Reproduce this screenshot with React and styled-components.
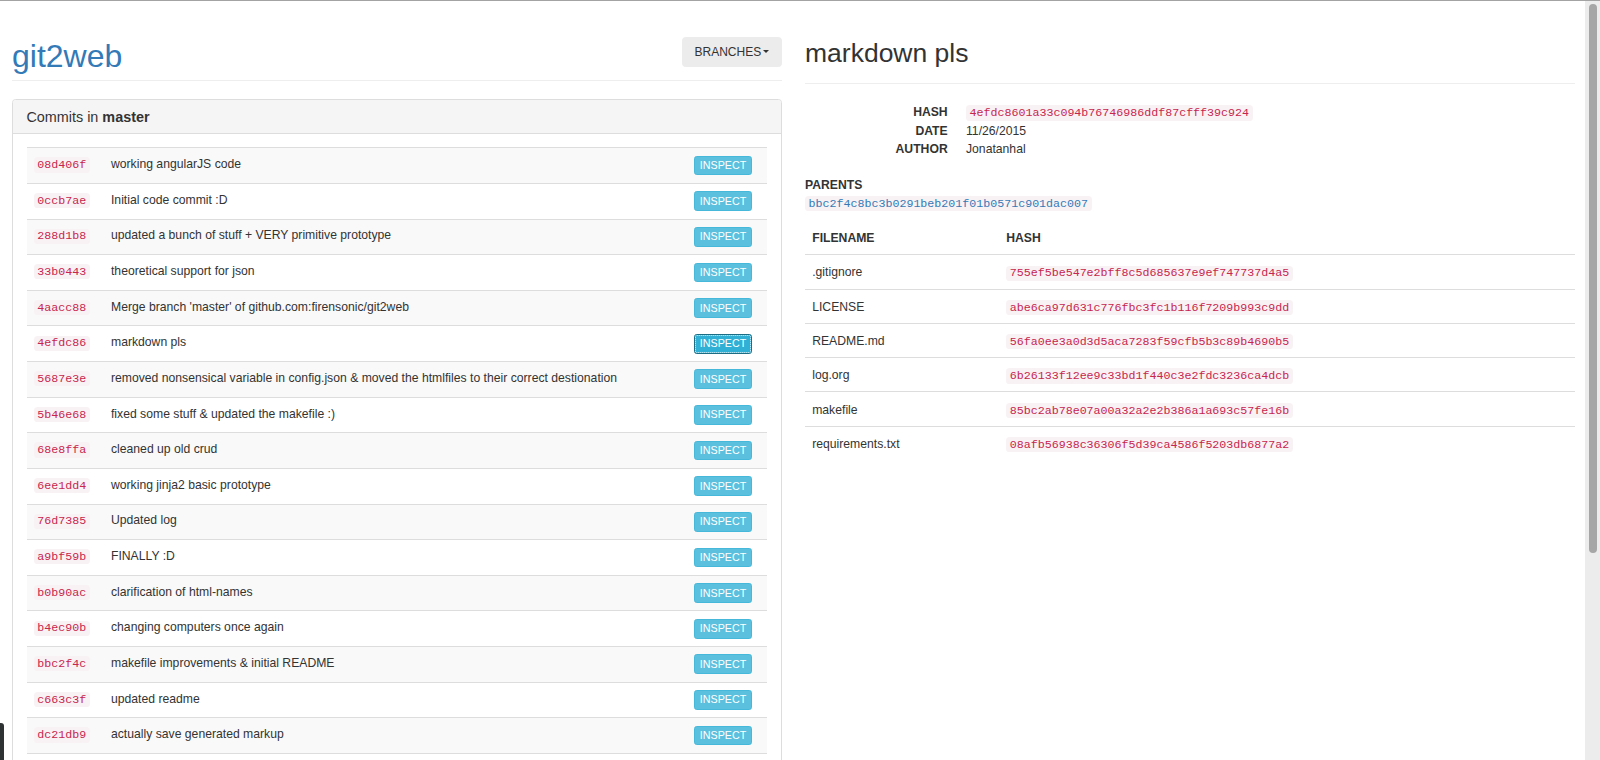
import React from "react";
import styled, { createGlobalStyle, css } from "styled-components";

const GlobalStyle = createGlobalStyle`
  html, body {
    margin: 0;
    padding: 0;
    height: 100%;
    overflow: hidden;
    background: #fff;
  }
  body {
    font-family: "Liberation Sans", Arial, Helvetica, sans-serif;
    font-size: 12.2px;
    line-height: 17.7px;
    color: #333;
  }
  #root { height: 100%; }
  * { box-sizing: border-box; }
`;

const Frame = styled.div`
  display: flex;
  height: 760px;
  border-top: 1px solid #a3a3a3;
  overflow: hidden;
`;

const Page = styled.main`
  flex: 1;
  min-width: 0;
  display: grid;
  grid-template-columns: 770px 770px;
  column-gap: 23px;
  padding-left: 12px;
  align-items: start;
  overflow: hidden;
`;

const Column = styled.section`
  display: flex;
  flex-direction: column;
  min-width: 0;
`;

const LeftHeader = styled.header`
  display: flex;
  justify-content: space-between;
  align-items: flex-start;
  padding-top: 36px;
  border-bottom: 1px solid #eee;
`;

const Brand = styled.h1`
  margin: 2px 0 5.4px;
  font-size: 32px;
  line-height: 35.6px;
  font-weight: 400;
  color: #337ab7;
`;

const BranchesButton = styled.button`
  display: flex;
  align-items: center;
  height: 29.7px;
  padding: 0 11.6px 0 11.8px;
  border: 1px solid #ececec;
  border-radius: 3.6px;
  background: #ececec;
  color: #333;
  font-family: inherit;
  font-size: 12px;
  cursor: pointer;
`;

const Caret = styled.span`
  display: inline-block;
  width: 0;
  height: 0;
  margin-left: 2.2px;
  border-top: 3.6px solid #333;
  border-left: 3.4px solid transparent;
  border-right: 3.4px solid transparent;
`;

const Panel = styled.div`
  margin-top: 18.3px;
  border: 1px solid #ddd;
  border-radius: 3.6px;
  background: #fff;
`;

const PanelHeading = styled.div`
  display: flex;
  align-items: center;
  height: 34px;
  padding: 1.5px 13.4px 0;
  background: #f5f5f5;
  border-bottom: 1px solid #ddd;
  border-radius: 3px 3px 0 0;
  font-size: 14.4px;
  color: #333;
`;

const PanelBody = styled.div`
  padding: 13px 14px 13px 13.5px;
`;

const Table = styled.table`
  width: 100%;
  border-collapse: collapse;
  table-layout: fixed;
`;

const CommitRow = styled.tr`
  background: ${(p) => (p.$striped ? "#f9f9f9" : "#fff")};
`;

const Cell = styled.td`
  padding: 7.95px 7.2px 6.95px;
  border-top: 1px solid #ddd;
  vertical-align: top;
  line-height: 17.7px;
  white-space: nowrap;
  overflow: hidden;
  text-overflow: ellipsis;
`;

const HashCell = styled(Cell)`
  width: 77.3px;
`;

const ActionCell = styled(Cell)`
  width: 73px;
  padding: 7.45px 15.3px 7.45px 0;
`;

const Code = styled.code`
  display: inline-block;
  padding: 1.85px 3.6px;
  border-radius: 3.6px;
  background: #f9f2f4;
  color: ${(p) => (p.$tone === "link" ? "#337ab7" : "#c7254e")};
  font-family: "Liberation Mono", "Courier New", monospace;
  font-size: 11.65px;
  line-height: 11.5px;
  vertical-align: baseline;
`;

const InspectButton = styled.button`
  display: block;
  margin-left: auto;
  width: 57.4px;
  height: 19.75px;
  padding: 0;
  border: 1px solid #46b8da;
  border-radius: 2.7px;
  background: #5bc0de;
  color: #fff;
  font-family: inherit;
  font-size: 10.7px;
  line-height: 17px;
  text-align: center;
  cursor: pointer;
  ${(p) =>
    p.$focused &&
    css`
      background: #31b0d5;
      border-color: #1b6d85;
      outline: 1px dotted rgba(255, 255, 255, 0.9);
      outline-offset: -2px;
    `}
`;

const RightHeader = styled.header`
  padding: 37.5px 0 14.5px;
  border-bottom: 1px solid #eee;
`;

const Title = styled.h2`
  margin: 0;
  font-size: 26.5px;
  line-height: 29.7px;
  font-weight: 400;
  color: #333;
`;

const MetaList = styled.dl`
  display: grid;
  grid-template-columns: 142.7px 1fr;
  column-gap: 18.3px;
  margin: 19.6px 0 19px;
  line-height: 18.3px;
`;

const MetaLabel = styled.dt`
  font-weight: 700;
  text-align: right;
`;

const MetaValue = styled.dd`
  margin: 0;
`;

const SectionLabel = styled.div`
  font-weight: 700;
  line-height: 17.7px;
`;

const ParentLine = styled.div`
  line-height: 17.7px;
`;

const FilesTable = styled.table`
  width: 100%;
  margin-top: 8.8px;
  border-collapse: collapse;
  table-layout: fixed;
`;

const HeadCell = styled.th`
  padding: 8.2px 7.2px 7px;
  text-align: left;
  font-weight: 700;
  line-height: 17.7px;
  vertical-align: bottom;
  width: ${(p) => p.$width || "auto"};
`;

const FileCell = styled.td`
  padding: 8.2px 7.2px 6.2px;
  border-top: 1px solid #ddd;
  line-height: 18.9px;
  vertical-align: top;
  white-space: nowrap;
`;

const Scrollbar = styled.div`
  flex: none;
  width: 15px;
  background: #ececec;
  padding: 3px 3px 0 4px;
`;

const Thumb = styled.div`
  height: 549px;
  border-radius: 4px;
  background: #a6a6a6;
`;

const EdgeTab = styled.div`
  position: fixed;
  left: 0;
  bottom: 0;
  width: 3.7px;
  height: 37px;
  background: #2e3232;
  border-radius: 0 3px 0 0;
`;

const commits = [
  ["08d406f", "working angularJS code"],
  ["0ccb7ae", "Initial code commit :D"],
  ["288d1b8", "updated a bunch of stuff + VERY primitive prototype"],
  ["33b0443", "theoretical support for json"],
  ["4aacc88", "Merge branch 'master' of github.com:firensonic/git2web"],
  ["4efdc86", "markdown pls"],
  ["5687e3e", "removed nonsensical variable in config.json & moved the htmlfiles to their correct destionation"],
  ["5b46e68", "fixed some stuff & updated the makefile :)"],
  ["68e8ffa", "cleaned up old crud"],
  ["6ee1dd4", "working jinja2 basic prototype"],
  ["76d7385", "Updated log"],
  ["a9bf59b", "FINALLY :D"],
  ["b0b90ac", "clarification of html-names"],
  ["b4ec90b", "changing computers once again"],
  ["bbc2f4c", "makefile improvements & initial README"],
  ["c663c3f", "updated readme"],
  ["dc21db9", "actually save generated markup"],
];

const files = [
  [".gitignore", "755ef5be547e2bff8c5d685637e9ef747737d4a5"],
  ["LICENSE", "abe6ca97d631c776fbc3fc1b116f7209b993c9dd"],
  ["README.md", "56fa0ee3a0d3d5aca7283f59cfb5b3c89b4690b5"],
  ["log.org", "6b26133f12ee9c33bd1f440c3e2fdc3236ca4dcb"],
  ["makefile", "85bc2ab78e07a00a32a2e2b386a1a693c57fe16b"],
  ["requirements.txt", "08afb56938c36306f5d39ca4586f5203db6877a2"],
];

export default function App() {
  return (
    <>
      <GlobalStyle />
      <Frame>
        <Page>
          <Column>
            <LeftHeader>
              <Brand>git2web</Brand>
              <BranchesButton>
                BRANCHES
                <Caret />
              </BranchesButton>
            </LeftHeader>
            <Panel>
              <PanelHeading>
                Commits in&nbsp;<b>master</b>
              </PanelHeading>
              <PanelBody>
                <Table>
                  <tbody>
                    {commits.map(([hash, msg], i) => (
                      <CommitRow key={hash} $striped={i % 2 === 0}>
                        <HashCell>
                          <Code>{hash}</Code>
                        </HashCell>
                        <Cell>{msg}</Cell>
                        <ActionCell>
                          <InspectButton $focused={hash === "4efdc86"}>INSPECT</InspectButton>
                        </ActionCell>
                      </CommitRow>
                    ))}
                    <CommitRow>
                      <HashCell />
                      <Cell />
                      <ActionCell />
                    </CommitRow>
                  </tbody>
                </Table>
              </PanelBody>
            </Panel>
          </Column>

          <Column>
            <RightHeader>
              <Title>markdown pls</Title>
            </RightHeader>
            <MetaList>
              <MetaLabel>HASH</MetaLabel>
              <MetaValue>
                <Code>4efdc8601a33c094b76746986ddf87cfff39c924</Code>
              </MetaValue>
              <MetaLabel>DATE</MetaLabel>
              <MetaValue>11/26/2015</MetaValue>
              <MetaLabel>AUTHOR</MetaLabel>
              <MetaValue>Jonatanhal</MetaValue>
            </MetaList>
            <SectionLabel>PARENTS</SectionLabel>
            <ParentLine>
              <Code $tone="link">bbc2f4c8bc3b0291beb201f01b0571c901dac007</Code>
            </ParentLine>
            <FilesTable>
              <thead>
                <tr>
                  <HeadCell $width="194px">FILENAME</HeadCell>
                  <HeadCell>HASH</HeadCell>
                </tr>
              </thead>
              <tbody>
                {files.map(([name, hash]) => (
                  <tr key={name}>
                    <FileCell>{name}</FileCell>
                    <FileCell>
                      <Code>{hash}</Code>
                    </FileCell>
                  </tr>
                ))}
              </tbody>
            </FilesTable>
          </Column>
        </Page>
        <Scrollbar>
          <Thumb />
        </Scrollbar>
      </Frame>
      <EdgeTab />
    </>
  );
}
